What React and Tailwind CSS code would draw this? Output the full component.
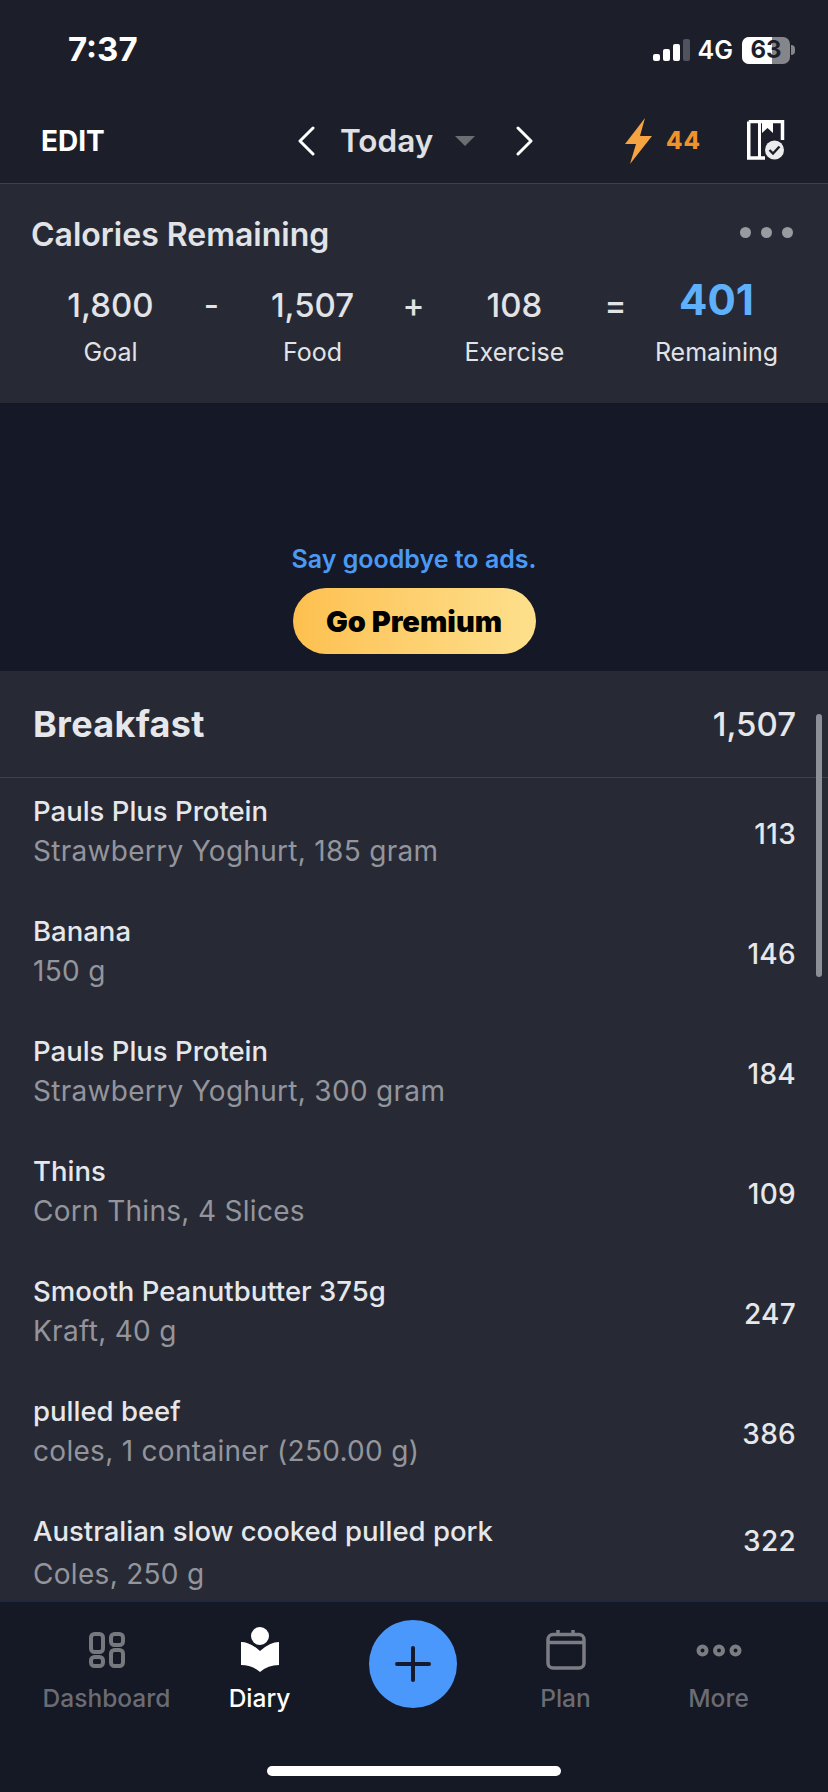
const font = { fontFamily: 'Inter, "Noto Sans", sans-serif' };

const foods = [
  ['Pauls Plus Protein', 'Strawberry Yoghurt, 185 gram', '113'],
  ['Banana', '150 g', '146'],
  ['Pauls Plus Protein', 'Strawberry Yoghurt, 300 gram', '184'],
  ['Thins', 'Corn Thins, 4 Slices', '109'],
  ['Smooth Peanutbutter 375g', 'Kraft, 40 g', '247'],
  ['pulled beef', 'coles, 1 container (250.00 g)', '386'],
  ['Australian slow cooked pulled pork', 'Coles, 250 g', '322'],
];

function StatusBar() {
  return (
    <div className="h-[90px] flex items-center justify-between pl-[68px] pr-[33px] pt-[10px] bg-[#1c1f2a] text-white">
      <span className="text-[33px] font-bold leading-none -mt-[2px]">7:37</span>
      <div className="flex items-center">
        <svg width="37" height="22" viewBox="0 0 37 22" className="mr-[8px]">
          <rect x="0" y="15" width="7" height="7" rx="2" fill="#fff" />
          <rect x="10" y="10" width="7" height="12" rx="2" fill="#fff" />
          <rect x="20" y="5" width="7" height="17" rx="2" fill="#fff" />
          <rect x="30" y="0" width="7" height="22" rx="2" fill="#50535e" />
        </svg>
        <span className="text-[25px] font-semibold leading-none mr-[9px]">4G</span>
        <div className="relative w-[48px] h-[27px] rounded-[7px] overflow-hidden bg-[#85868c] flex items-center justify-center">
          <div className="absolute left-0 top-0 bottom-0 w-[30px] bg-white" />
          <span className="relative text-[24px] font-bold text-[#1c1f2a] leading-none">63</span>
        </div>
        <div className="w-[4px] h-[10px] ml-[1px] rounded-r-full bg-[#85868c]" />
      </div>
    </div>
  );
}

function Header() {
  return (
    <div className="h-[94px] flex items-center bg-[#1c1f2a] border-b border-[#3f424c] pt-[8px]">
      <span className="ml-[41px] w-[65px] text-[28px] font-bold text-white leading-none">EDIT</span>
      <svg width="18" height="30" viewBox="0 0 18 30" className="ml-[191px]" fill="none" stroke="#fff" strokeWidth="3" strokeLinecap="round" strokeLinejoin="round">
        <path d="M16 2 L3 15 L16 28" />
      </svg>
      <span className="ml-[25px] w-[93px] text-[31.5px] font-semibold leading-none text-[#dfe0e4]">Today</span>
      <div className="ml-[22px] w-0 h-0 border-x-[10px] border-x-transparent border-t-[10px] border-t-[#6c6d73]" />
      <svg width="18" height="30" viewBox="0 0 18 30" className="ml-[41px]" fill="none" stroke="#fff" strokeWidth="3" strokeLinecap="round" strokeLinejoin="round">
        <path d="M2 2 L15 15 L2 28" />
      </svg>
      <svg width="28" height="46" viewBox="0 0 28 46" className="ml-[91px]">
        <path d="M20 0 L0 26 L11 26 L5 46 L27 18 L15 18 Z" fill="#f6a341" />
      </svg>
      <span className="ml-[13px] w-[34px] text-[24px] font-extrabold tracking-[1px] leading-none text-[#ef922b]">44</span>
      <svg width="38" height="41" viewBox="0 0 38 41" className="ml-[47px]">
        <path d="M1.75 1.5 H35.5 V20 M1.75 1.5 V38 H18" fill="none" stroke="#fff" strokeWidth="3.5" />
        <path d="M12.5 1.5 V38" fill="none" stroke="#fff" strokeWidth="3" />
        <path d="M15 1 H26 V13 L20.5 8 L15 13 Z" fill="#fff" />
        <circle cx="27.5" cy="30" r="11" fill="#1c1f2a" />
        <circle cx="27.5" cy="30" r="9.5" fill="#ececee" />
        <path d="M22.5 30 L26 33.5 L32.5 26.5" fill="none" stroke="#1c1f2a" strokeWidth="2.4" />
      </svg>
    </div>
  );
}

function Stat({ value, label, blue }) {
  return (
    <div className="flex flex-col items-center whitespace-nowrap">
      <span className={blue ? 'text-[42px] font-bold text-[#5fb0fb] leading-[44px] -mt-[5px] mb-[5px]' : 'text-[33px] font-medium text-[#e2e3e7] leading-[44px]'}>{value}</span>
      <span className="mt-[11px] text-[25px] text-[#e2e3e7] leading-[28px]">{label}</span>
    </div>
  );
}

function Op({ children }) {
  return <span className="text-center text-[33px] font-medium text-[#e2e3e7] leading-[44px]">{children}</span>;
}

function Summary() {
  return (
    <div className="h-[219px] bg-[#272a35] pt-[31px]">
      <div className="flex items-center justify-between pl-[31px] pr-[35px] h-[40px]">
        <span className="text-[32px] font-semibold text-[#e2e3e7] leading-none">Calories Remaining</span>
        <div className="flex gap-[10px] -mt-[6px]">
          <div className="w-[11px] h-[11px] rounded-full bg-[#9a9ba1]" />
          <div className="w-[11px] h-[11px] rounded-full bg-[#9a9ba1]" />
          <div className="w-[11px] h-[11px] rounded-full bg-[#9a9ba1]" />
        </div>
      </div>
      <div className="grid grid-cols-[repeat(7,101px)] pl-[60px] mt-[28px]">
        <Stat value="1,800" label="Goal" />
        <Op>-</Op>
        <Stat value="1,507" label="Food" />
        <Op>+</Op>
        <Stat value="108" label="Exercise" />
        <Op>=</Op>
        <Stat value="401" label="Remaining" blue />
      </div>
    </div>
  );
}

function Ad() {
  return (
    <div className="h-[268px] bg-[#151826] flex flex-col items-center justify-end pb-[17px]">
      <span className="text-[25px] font-semibold text-[#4a9af5] leading-[28px] mb-[15px]">Say goodbye to ads.</span>
      <div className="w-[243px] h-[66px] rounded-full bg-gradient-to-r from-[#fdc04f] to-[#fde08c] flex items-center justify-center">
        <span className="text-[29px] font-black text-black leading-none">Go Premium</span>
      </div>
    </div>
  );
}

function FoodRow({ name, sub, cal, last }) {
  return (
    <div className={last ? 'h-[122px] flex items-center justify-between pr-[32px]' : 'h-[120px] flex items-center justify-between pr-[32px]'}>
      <div className={last ? 'flex flex-col pb-[5px]' : 'flex flex-col pb-[7px]'}>
        <span className="text-[27.5px] font-medium text-[#e6e7ea] leading-[32px]">{name}</span>
        <span className={last ? 'mt-[11px] text-[28px] tracking-[0.3px] text-[#94959c] leading-[32px]' : 'mt-[8px] text-[28px] tracking-[0.3px] text-[#94959c] leading-[32px]'}>{sub}</span>
      </div>
      <span className={last ? 'text-[28px] font-medium tracking-[0.3px] text-[#e6e7ea] leading-none -mt-[28px]' : 'text-[28px] font-medium tracking-[0.3px] text-[#e6e7ea] leading-none'}>{cal}</span>
    </div>
  );
}

function List() {
  return (
    <div className="relative flex-1 min-h-0 bg-[#272a35] overflow-hidden">
      <div className="h-[107px] flex items-center justify-between pl-[33px] pr-[32px] border-b border-[#3f424c]">
        <span className="text-[36px] font-bold tracking-[0.3px] text-[#e6e7ea] leading-none">Breakfast</span>
        <span className="text-[33px] font-medium text-[#e6e7ea] leading-none">1,507</span>
      </div>
      <div className="pl-[33px] -mt-[4px]">
        {foods.map((f, i) => (
          <FoodRow key={i} name={f[0]} sub={f[1]} cal={f[2]} last={i === foods.length - 1} />
        ))}
      </div>
      <div className="absolute left-[816px] top-[43px] w-[6px] h-[263px] rounded-full bg-[#8d8f97]" />
    </div>
  );
}

function NavItem({ icon, label, active }) {
  return (
    <div className="flex flex-col items-center">
      <div className="h-[48px] flex items-center justify-center">{icon}</div>
      <span className={active ? 'mt-[10px] text-[24.5px] font-medium text-white leading-[28px]' : 'mt-[10px] text-[24.5px] font-medium text-[#6b6c73] leading-[28px]'}>{label}</span>
    </div>
  );
}

function Nav() {
  return (
    <div className="relative h-[192px] bg-[#151825] border-t-2 border-[#22293a]">
      <div className="grid grid-cols-[repeat(5,153px)] pl-[30px] pt-[24px]">
        <NavItem
          label="Dashboard"
          icon={
            <svg width="36" height="36" viewBox="0 0 36 36" fill="none" stroke="#77787e" strokeWidth="4">
              <rect x="2" y="2" width="12" height="18" rx="3.5" />
              <rect x="22" y="2" width="12" height="11" rx="3.5" />
              <rect x="2" y="25" width="12" height="9" rx="3.5" />
              <rect x="22" y="18" width="12" height="16" rx="3.5" />
            </svg>
          }
        />
        <NavItem
          label="Diary"
          active
          icon={
            <svg width="40" height="46" viewBox="0 0 40 46">
              <circle cx="20" cy="9" r="9" fill="#fff" />
              <path d="M1 15 Q10 15 20 24 Q30 15 39 15 V38 Q28 38 20 45 Q12 38 1 38 Z" fill="#fff" />
            </svg>
          }
        />
        <div className="flex justify-center">
          <div className="w-[88px] h-[88px] mt-[-6px] rounded-full bg-[#4a98fb] flex items-center justify-center">
            <svg width="36" height="36" viewBox="0 0 36 36" stroke="#151a2c" strokeWidth="4" strokeLinecap="round">
              <path d="M18 2 V34 M2 18 H34" />
            </svg>
          </div>
        </div>
        <NavItem
          label="Plan"
          icon={
            <svg width="40" height="40" viewBox="0 0 40 40" fill="none" stroke="#7c7d83" strokeWidth="3.5">
              <rect x="2" y="4.5" width="36" height="33.5" rx="5" />
              <path d="M2 12.5 H38 M12 0 V5 M27 0 V5" />
            </svg>
          }
        />
        <NavItem
          label="More"
          icon={
            <svg width="46" height="13" viewBox="0 0 46 13" fill="none" stroke="#7c7d83" strokeWidth="4">
              <circle cx="6.5" cy="6.5" r="4" />
              <circle cx="23" cy="6.5" r="4" />
              <circle cx="39.5" cy="6.5" r="4" />
            </svg>
          }
        />
      </div>
      <div className="absolute left-[267px] top-[164px] w-[294px] h-[10px] rounded-full bg-white" />
    </div>
  );
}

export default function App() {
  return (
    <div className="w-[828px] h-[1792px] flex flex-col overflow-hidden bg-[#151826]" style={font}>
      <StatusBar />
      <Header />
      <Summary />
      <Ad />
      <List />
      <Nav />
    </div>
  );
}
